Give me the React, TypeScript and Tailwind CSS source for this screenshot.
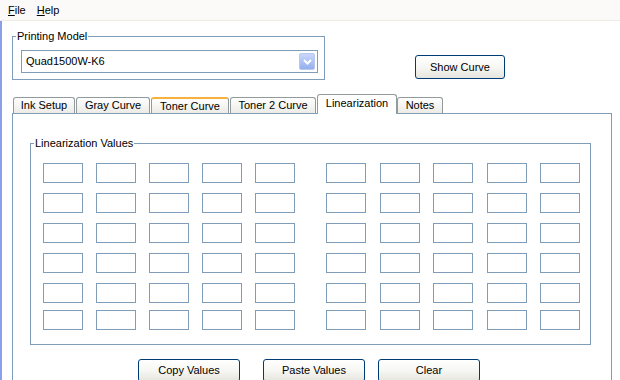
import React from 'react'

const tabs = [
  { label: 'Ink Setup', w: 'w-[62px]', ml: 'ml-0' },
  { label: 'Gray Curve', w: 'w-[74px]', ml: 'ml-[1px]' },
  { label: 'Toner Curve', w: 'w-[78px]', ml: 'ml-[1px]', hover: true },
  { label: 'Toner 2 Curve', w: 'w-[86px]', ml: 'ml-[1px]' },
  { label: 'Linearization', w: 'w-[80px]', ml: 'ml-[1px]', active: true },
  { label: 'Notes', w: 'w-[46px]', ml: 'ml-0' },
]

function Box() {
  return <div className="w-[40px] h-[20px] border border-[#7f9db9] bg-white" />
}

function Row({ className = '' }) {
  return (
    <div className={'flex ' + className}>
      <div className="flex gap-[13px]">
        <Box /><Box /><Box /><Box /><Box />
      </div>
      <div className="flex gap-[13.5px] ml-[31px]">
        <Box /><Box /><Box /><Box /><Box />
      </div>
    </div>
  )
}

function Button({ children, className = '' }) {
  return (
    <button className={'h-[23px] border border-[#003c74] rounded-[3px] bg-linear-to-b from-white via-[#f7f7f4] to-[#e6e5de] text-black ' + className}>
      {children}
    </button>
  )
}

export default function App() {
  return (
    <div className="w-[620px] h-[380px] overflow-hidden bg-white text-black text-[11px] font-['Liberation_Sans',Arial,sans-serif] flex flex-col">
      <div className="h-[21px] shrink-0 bg-[#fbfaf8] border-b border-[#efebe4] flex items-center pl-[8px] gap-[11px]">
        <span><u>F</u>ile</span>
        <span><u>H</u>elp</span>
      </div>

      <div className="flex-1 border-l-2 border-[#8b9ee9] flex flex-col">
        <div className="flex items-end ml-[10px] mt-[9px]">
          <fieldset className="w-[313px] h-[50px] border border-[#7f9db9] p-0">
            <legend className="ml-[3px] px-[1px] leading-[13px]">Printing Model</legend>
            <div className="ml-[8px] mt-[7px] w-[297px] h-[23px] border border-[#7f9db9] flex items-center justify-between pl-[4px] pr-[2px]">
              <span>Quad1500W-K6</span>
              <div className="w-[16px] h-[17px] rounded-[2px] bg-linear-to-b from-[#c9d7fa] to-[#95afec] border border-[#b7c9f3] flex items-center justify-center">
                <svg width="9" height="6" viewBox="0 0 9 6">
                  <polyline points="1,1 4.5,4.5 8,1" fill="none" stroke="white" strokeWidth="2" />
                </svg>
              </div>
            </div>
          </fieldset>
          <Button className="w-[90px] h-[24px] ml-[90px] mb-[1px]">Show Curve</Button>
        </div>

        <div className="flex items-end ml-[11px] mt-[14px] relative z-10">
          {tabs.map((t) => (
            <div
              key={t.label}
              className={
                t.w + ' ' + t.ml + ' flex items-center justify-center border border-b-0 border-[#919b9c] rounded-t-[3px] ' +
                (t.active
                  ? 'h-[20px] bg-white mb-[-1px] pb-[2px]'
                  : t.hover
                  ? 'h-[16px] bg-linear-to-b from-white to-[#ecebe6] border-t-2 border-t-[#f7b23e]'
                  : 'h-[16px] bg-linear-to-b from-white to-[#ecebe6]')
              }
            >
              {t.label}
            </div>
          ))}
        </div>

        <div className="ml-[10px] w-[600px] h-[300px] shrink-0 border border-[#7f9db9] bg-white">
          <fieldset className="ml-[17px] mt-[23px] w-[561px] h-[208px] border border-[#7f9db9] p-0">
            <legend className="ml-[3px] px-[1px] leading-[13px]">Linearization Values</legend>
            <div className="ml-[12px] mt-[13px] flex flex-col gap-[10px]">
              <Row />
              <Row />
              <Row />
              <Row />
              <Row />
            </div>
            <Row className="ml-[12px] mt-[7px]" />
          </fieldset>

          <div className="flex mt-[14px] ml-[125px]">
            <Button className="w-[102px]">Copy Values</Button>
            <Button className="w-[102px] ml-[23px]">Paste Values</Button>
            <Button className="w-[102px] ml-[13px]">Clear</Button>
          </div>
        </div>
      </div>
    </div>
  )
}
